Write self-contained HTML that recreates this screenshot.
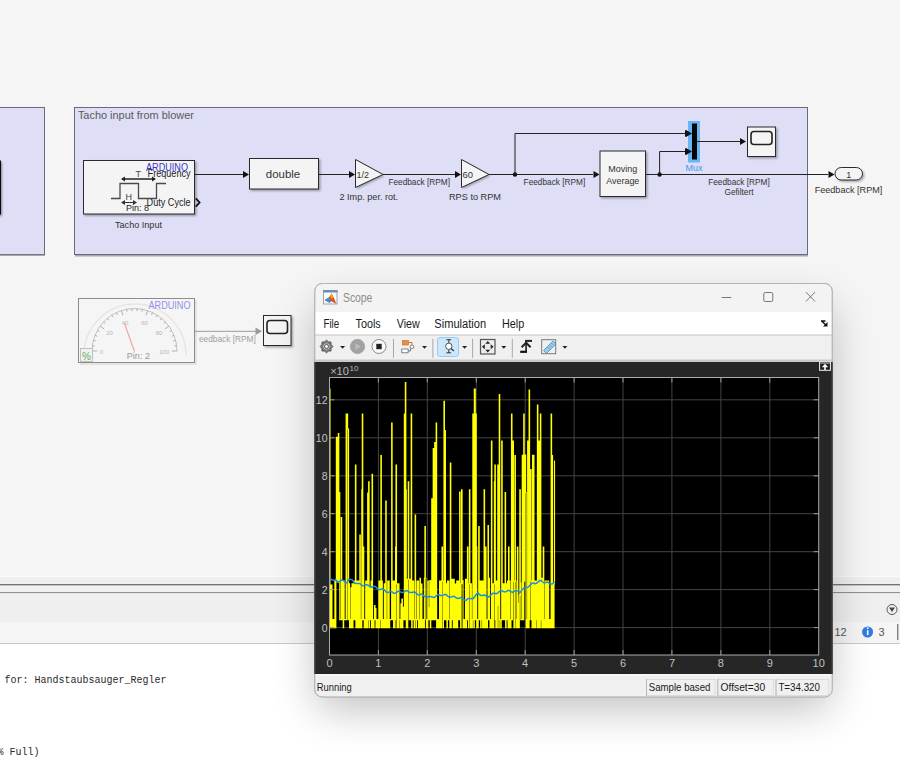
<!DOCTYPE html>
<html><head><meta charset="utf-8"><title>Simulink Scope</title>
<style>html,body{margin:0;padding:0;width:900px;height:761px;overflow:hidden;background:#f5f5f5}
svg{display:block;font-family:"Liberation Sans",sans-serif}</style></head>
<body><svg width="900" height="761" viewBox="0 0 900 761">
<defs><filter id="sh" x="-30%" y="-30%" width="160%" height="160%"><feGaussianBlur stdDeviation="22"/></filter><filter id="bs" x="-20%" y="-20%" width="140%" height="140%"><feGaussianBlur stdDeviation="1.1"/></filter></defs>
<rect x="0" y="0" width="900" height="577" fill="#f5f5f5"/>
<rect x="-10" y="107.5" width="54.5" height="147" fill="#dedef6" stroke="#6a6a7c" stroke-width="1"/>
<rect x="-10" y="254.5" width="55" height="1.5" fill="#8c8c98" opacity="0.75"/>
<rect x="-10" y="160.5" width="11" height="54" fill="#111"/>
<rect x="-9" y="162" width="11" height="54" fill="#000" opacity="0.4" filter="url(#bs)"/>
<rect x="74.5" y="107.5" width="733" height="147" fill="#dedef6" stroke="#6a6a7c" stroke-width="1"/>
<rect x="75" y="255" width="733" height="1.5" fill="#8c8c98" opacity="0.75"/>
<text x="77.9" y="119.3" font-size="11" fill="#5a5a5a" text-anchor="start" textLength="116" lengthAdjust="spacingAndGlyphs" >Tacho input from blower</text>
<rect x="84.5" y="161.5" width="112" height="54.5" fill="#000" opacity="0.32" filter="url(#bs)"/><rect x="83.5" y="160.5" width="111" height="53.5" fill="#f4f4f4" stroke="#2a2a2a" stroke-width="1"/>
<text x="188" y="170.5" font-size="10" fill="#3535d0" text-anchor="end" textLength="42" lengthAdjust="spacingAndGlyphs" >ARDUINO</text>
<text x="190.6" y="177.4" font-size="10" fill="#222" text-anchor="end" textLength="43" lengthAdjust="spacingAndGlyphs" >Frequency</text>
<text x="190.6" y="205.6" font-size="10" fill="#222" text-anchor="end" textLength="44" lengthAdjust="spacingAndGlyphs" >Duty Cycle</text>
<text x="126" y="210.8" font-size="9" fill="#222" text-anchor="start" textLength="23" lengthAdjust="spacingAndGlyphs" >Pin: 8</text>
<text x="115" y="227.5" font-size="9" fill="#333" text-anchor="start" textLength="47" lengthAdjust="spacingAndGlyphs" >Tacho Input</text>
<path d="M111,198.5 H120 V183.5 H138.5 V198.5 H156.5 V183.5 H166" fill="none" stroke="#4a4a4a" stroke-width="1.3"/>
<path d="M122,179 H155" stroke="#222" stroke-width="1.3"/><path d="M121,179 l4,-2.5 v5 z M156,179 l-4,-2.5 v5 z" fill="#222"/>
<text x="135.5" y="176.6" font-size="9" fill="#444" text-anchor="start" >T</text>
<path d="M122,202.5 H136" stroke="#333" stroke-width="1"/><path d="M121,202.5 l4,-2.5 v5 z M137,202.5 l-4,-2.5 v5 z" fill="#333"/>
<text x="125.5" y="200.4" font-size="9" fill="#444" text-anchor="start" >H</text>
<path d="M195.8,198.3 L199.6,202.5 L195.8,206.7" fill="none" stroke="#111" stroke-width="1.8"/>
<path d="M195,174.5 H243" stroke="#222" stroke-width="1"/>
<path d="M243,171.0 L249,174.5 L243,178.0 Z" fill="#111"/>
<rect x="250.5" y="159.5" width="70" height="31.5" fill="#000" opacity="0.32" filter="url(#bs)"/><rect x="249.5" y="158.5" width="69" height="30.5" fill="#f4f4f4" stroke="#2a2a2a" stroke-width="1"/>
<text x="283" y="178" font-size="11.5" fill="#333" text-anchor="middle" textLength="34.4" lengthAdjust="spacingAndGlyphs" >double</text>
<path d="M319,174.5 H349" stroke="#222" stroke-width="1"/>
<path d="M349,171.0 L355,174.5 L349,178.0 Z" fill="#111"/>
<path d="M357,161 L384.5,176 L357,189 Z" fill="#000" opacity="0.3" filter="url(#bs)"/>
<path d="M355.5,159.5 L383,174.5 L355.5,187.5 Z" fill="#f4f4f4" stroke="#2a2a2a" stroke-width="1"/>
<text x="356.5" y="178" font-size="9.5" fill="#333" text-anchor="start" textLength="12.4" lengthAdjust="spacingAndGlyphs" >1/2</text>
<text x="339.5" y="200" font-size="9" fill="#333" text-anchor="start" textLength="58.6" lengthAdjust="spacingAndGlyphs" >2 Imp. per. rot.</text>
<path d="M383,174.5 H455" stroke="#222" stroke-width="1"/>
<path d="M455,171.0 L461,174.5 L455,178.0 Z" fill="#111"/>
<text x="388.4" y="184.5" font-size="8.3" fill="#333" text-anchor="start" textLength="61.6" lengthAdjust="spacingAndGlyphs" >Feedback [RPM]</text>
<path d="M463,161 L490.5,176 L463,189 Z" fill="#000" opacity="0.3" filter="url(#bs)"/>
<path d="M461.5,159.5 L489,174.5 L461.5,187.5 Z" fill="#f4f4f4" stroke="#2a2a2a" stroke-width="1"/>
<text x="462.5" y="178" font-size="9.5" fill="#333" text-anchor="start" textLength="10.5" lengthAdjust="spacingAndGlyphs" >60</text>
<text x="449" y="200" font-size="9" fill="#333" text-anchor="start" textLength="52" lengthAdjust="spacingAndGlyphs" >RPS to RPM</text>
<path d="M489,174.5 H593" stroke="#222" stroke-width="1"/>
<path d="M593.5,171.0 L599.5,174.5 L593.5,178.0 Z" fill="#111"/>
<circle cx="515" cy="174.5" r="2.2" fill="#111"/>
<path d="M515,174.5 V133.5 H685" fill="none" stroke="#222" stroke-width="1"/>
<path d="M685,130.0 L691,133.5 L685,137.0 Z" fill="#111"/>
<text x="523.6" y="184.5" font-size="8.3" fill="#333" text-anchor="start" textLength="61.6" lengthAdjust="spacingAndGlyphs" >Feedback [RPM]</text>
<rect x="601.0" y="152.0" width="46.5" height="46.5" fill="#000" opacity="0.32" filter="url(#bs)"/><rect x="600.0" y="151.0" width="45.5" height="45.5" fill="#f4f4f4" stroke="#2a2a2a" stroke-width="1"/>
<text x="622.8" y="172" font-size="9" fill="#333" text-anchor="middle" textLength="29" lengthAdjust="spacingAndGlyphs" >Moving</text>
<text x="622.8" y="183.5" font-size="9" fill="#333" text-anchor="middle" textLength="33" lengthAdjust="spacingAndGlyphs" >Average</text>
<path d="M646,174.5 H828" stroke="#222" stroke-width="1"/>
<circle cx="659.6" cy="174.5" r="2.2" fill="#111"/>
<path d="M659.6,174.5 V151.5 H685" fill="none" stroke="#222" stroke-width="1"/>
<path d="M685,148.0 L691,151.5 L685,155.0 Z" fill="#111"/>
<rect x="688" y="121" width="12" height="41.5" fill="#66b5f5"/>
<rect x="692" y="123.5" width="5" height="36" fill="#050505"/>
<path d="M686,130.0 L692,133.5 L686,137.0 Z" fill="#111"/>
<path d="M686,148.0 L692,151.5 L686,155.0 Z" fill="#111"/>
<text x="694" y="171" font-size="9" fill="#3d9ae8" text-anchor="middle" textLength="17" lengthAdjust="spacingAndGlyphs" >Mux</text>
<path d="M697,141.5 H740" stroke="#222" stroke-width="1"/>
<path d="M740,138.0 L746,141.5 L740,145.0 Z" fill="#111"/>
<rect x="748.5" y="128.0" width="29" height="30.5" fill="#000" opacity="0.32" filter="url(#bs)"/><rect x="747.5" y="127.0" width="28" height="29.5" fill="#f4f4f4" stroke="#2a2a2a" stroke-width="1"/>
<rect x="751" y="131.5" width="21" height="13" rx="3" fill="none" stroke="#222" stroke-width="1.6"/>
<text x="739" y="184.5" font-size="8.3" fill="#333" text-anchor="middle" textLength="61.6" lengthAdjust="spacingAndGlyphs" >Feedback [RPM]</text>
<text x="739" y="194.5" font-size="8.3" fill="#333" text-anchor="middle" textLength="29" lengthAdjust="spacingAndGlyphs" >Gefiltert</text>
<path d="M828.5,171.0 L834.5,174.5 L828.5,178.0 Z" fill="#111"/>
<rect x="836.5" y="169" width="28" height="13" rx="6.5" fill="#000" opacity="0.3" filter="url(#bs)"/>
<rect x="835" y="167.5" width="27.5" height="12.5" rx="6.25" fill="#f4f4f4" stroke="#2a2a2a" stroke-width="1"/>
<text x="848.7" y="177.8" font-size="9" fill="#333" text-anchor="middle" >1</text>
<text x="848.5" y="193" font-size="9" fill="#333" text-anchor="middle" textLength="67.7" lengthAdjust="spacingAndGlyphs" >Feedback [RPM]</text>
<rect x="80" y="300" width="117" height="65" fill="#000" opacity="0.07"/>
<rect x="78.5" y="298.5" width="116" height="64" fill="#f5f5f5" stroke="#8c8c8c" stroke-width="1"/>
<path d="M84,355 A51,51 0 0 1 186,355" fill="none" stroke="#e6e6e6" stroke-width="1.5"/>
<path d="M92,351 A42.5,42.5 0 0 1 177,351" fill="none" stroke="#b4b4b4" stroke-width="0.8"/>
<path d="M92.0,351.0 L97.0,351.0 M92.3,345.7 L94.8,346.0 M93.3,340.4 L95.8,341.1 M95.0,335.4 L97.3,336.3 M97.3,330.5 L99.4,331.7 M100.1,326.0 L104.2,329.0 M103.5,321.9 L105.3,323.6 M107.4,318.3 L109.0,320.2 M111.7,315.1 L113.1,317.2 M116.4,312.5 L117.5,314.8 M121.4,310.6 L122.9,315.3 M126.5,309.3 L127.0,311.7 M131.8,308.6 L132.0,311.1 M137.2,308.6 L137.0,311.1 M142.5,309.3 L142.0,311.7 M147.6,310.6 L146.1,315.3 M152.6,312.5 L151.5,314.8 M157.3,315.1 L155.9,317.2 M161.6,318.3 L160.0,320.2 M165.5,321.9 L163.7,323.6 M168.9,326.0 L164.8,329.0 M171.7,330.5 L169.6,331.7 M174.0,335.4 L171.7,336.3 M175.7,340.4 L173.2,341.1 M176.7,345.7 L174.2,346.0 M177.0,351.0 L172.0,351.0" stroke="#a8a8a8" stroke-width="0.9"/>
<text x="101.5" y="353.5" font-size="6" fill="#b5b5b5" text-anchor="middle" >0</text>
<text x="109.5" y="334.5" font-size="6" fill="#b5b5b5" text-anchor="middle" >20</text>
<text x="125" y="324.5" font-size="6" fill="#b5b5b5" text-anchor="middle" >40</text>
<text x="144.5" y="324.5" font-size="6" fill="#b5b5b5" text-anchor="middle" >60</text>
<text x="159" y="334.5" font-size="6" fill="#b5b5b5" text-anchor="middle" >80</text>
<text x="164" y="353.5" font-size="6" fill="#b5b5b5" text-anchor="middle" >100</text>
<path d="M134.5,351.5 L124.5,323.5" stroke="#f0a0a0" stroke-width="1.1"/>
<text x="126.8" y="359" font-size="9" fill="#9a9a9a" text-anchor="start" textLength="23.2" lengthAdjust="spacingAndGlyphs" >Pin: 2</text>
<text x="190.5" y="308.7" font-size="10" fill="#9090ec" text-anchor="end" textLength="42" lengthAdjust="spacingAndGlyphs" >ARDUINO</text>
<rect x="80.5" y="348.5" width="12" height="13" fill="#eef3ee" stroke="#b5b5b5" stroke-width="0.8"/>
<text x="86.5" y="359.5" font-size="10" fill="#6aa86a" text-anchor="middle" >%</text>
<path d="M195,331.3 H257" stroke="#9a9a9a" stroke-width="1"/>
<path d="M255.5,327.5 L262,331.3 L255.5,335 Z" fill="#9a9a9a"/>
<text x="199" y="341.5" font-size="8.3" fill="#a0a0a0" text-anchor="start" textLength="56.7" lengthAdjust="spacingAndGlyphs" >eedback [RPM]</text>
<rect x="264.5" y="316.5" width="28.5" height="31" fill="#000" opacity="0.32" filter="url(#bs)"/><rect x="263.5" y="315.5" width="27.5" height="30" fill="#f4f4f4" stroke="#2a2a2a" stroke-width="1"/>
<rect x="267" y="320.5" width="20.5" height="13" rx="3" fill="none" stroke="#222" stroke-width="1.6"/>
<rect x="0" y="576" width="900" height="1" fill="#fafafa"/>
<rect x="0" y="577" width="900" height="7.5" fill="#efefef"/>
<rect x="0" y="584" width="900" height="1.6" fill="#747474"/>
<rect x="0" y="585.6" width="900" height="6.5" fill="#f0f0f0"/>
<rect x="0" y="592" width="900" height="1.3" fill="#8c909a"/>
<rect x="0" y="593.3" width="900" height="29" fill="#efefef"/>
<rect x="0" y="622" width="900" height="21" fill="#f5f5f5"/>
<rect x="0" y="643" width="900" height="1" fill="#c8c8c8"/>
<rect x="0" y="644" width="900" height="117" fill="#ffffff"/>
<circle cx="892" cy="609.5" r="5" fill="none" stroke="#555" stroke-width="1"/><path d="M889,607.5 L895,607.5 L892,612 Z" fill="#444"/>
<text x="834.5" y="636" font-size="11" fill="#555" text-anchor="start" >12</text>
<circle cx="867.6" cy="632" r="5.5" fill="#2f7de1"/><rect x="866.9" y="630.2" width="1.6" height="4.8" fill="#fff"/><circle cx="867.7" cy="628.2" r="0.9" fill="#fff"/>
<text x="878.5" y="636" font-size="11" fill="#555" text-anchor="start" >3</text>
<rect x="897.3" y="624" width="1" height="16" fill="#555"/>
<text x="4.4" y="683.4" font-family="Liberation Mono, monospace" font-size="10" fill="#2a2a2a">for: Handstaubsauger_Regler</text>
<text x="-2.4" y="755" font-family="Liberation Mono, monospace" font-size="10" fill="#2a2a2a">% Full)</text>
<rect x="316.8" y="305.5" width="513.4000000000001" height="403.5" rx="8" fill="#000" opacity="0.25" filter="url(#sh)"/>
<rect x="314.8" y="283.5" width="517.4000000000001" height="413.5" rx="7.5" fill="#f3f3f3" stroke="#b4b4b4" stroke-width="1"/>
<clipPath id="wclip"><rect x="315.3" y="284.0" width="516.4000000000001" height="412.5" rx="7"/></clipPath>
<g clip-path="url(#wclip)">
<rect x="314.8" y="283.5" width="517.4000000000001" height="28.5" fill="#f3f3f3"/>
<rect x="323.5" y="290.5" width="13.5" height="13.5" fill="#fbfbfb" stroke="#9aa3ad" stroke-width="1"/>
<rect x="323" y="290" width="14.5" height="2.5" fill="#6b8fb3"/>
<path d="M324.6,300 L329.3,297.3 L331.6,293.2 L333.8,297.5 L336.3,303.8 L331.2,301.3 L329.5,302.8 Z" fill="#d9531e"/><path d="M324.6,300 L329.3,297.3 L330.8,300.8 L329.5,302.8 Z" fill="#3d8fd1"/><path d="M331.6,293.2 L333,296.8 L331.9,299.5 L330.6,296 Z" fill="#f5b51a"/>
<text x="343" y="302.2" font-size="12" fill="#8c8c8c" text-anchor="start" textLength="29.3" lengthAdjust="spacingAndGlyphs" >Scope</text>
<rect x="721.7" y="297" width="9.6" height="1" fill="#777"/>
<rect x="763.8" y="292.5" width="9" height="9" rx="1.5" fill="none" stroke="#777" stroke-width="1"/>
<path d="M806,292.2 L815,301.4 M815,292.2 L806,301.4" stroke="#777" stroke-width="1"/>
<rect x="314.8" y="312" width="517.4000000000001" height="23" fill="#ffffff"/>
<rect x="314.8" y="334.6" width="517.4000000000001" height="1" fill="#b4b4b4"/>
<text x="323.4" y="327.5" font-size="12" fill="#1a1a1a" text-anchor="start" textLength="15.8" lengthAdjust="spacingAndGlyphs" >File</text>
<text x="355.5" y="327.5" font-size="12" fill="#1a1a1a" text-anchor="start" textLength="25.2" lengthAdjust="spacingAndGlyphs" >Tools</text>
<text x="396.8" y="327.5" font-size="12" fill="#1a1a1a" text-anchor="start" textLength="23" lengthAdjust="spacingAndGlyphs" >View</text>
<text x="434.3" y="327.5" font-size="12" fill="#1a1a1a" text-anchor="start" textLength="51.8" lengthAdjust="spacingAndGlyphs" >Simulation</text>
<text x="502" y="327.5" font-size="12" fill="#1a1a1a" text-anchor="start" textLength="22.2" lengthAdjust="spacingAndGlyphs" >Help</text>
<path d="M821,321 L825.5,321 M821.5,321 L826.5,325.5" stroke="#111" stroke-width="1.4"/><path d="M827.5,322 L827.5,326.5 L823,326.5 Z" fill="#111"/>
<rect x="314.8" y="335.6" width="517.4000000000001" height="24" fill="#f0f0f0"/>
<rect x="314.8" y="359.5" width="517.4000000000001" height="2.5" fill="#c9c9c9"/>
<polygon points="332.80,346.50 331.12,348.41 330.95,350.95 328.41,351.12 326.50,352.80 324.59,351.12 322.05,350.95 321.88,348.41 320.20,346.50 321.88,344.59 322.05,342.05 324.59,341.88 326.50,340.20 328.41,341.88 330.95,342.05 331.12,344.59" fill="#8a8a8a" stroke="#444" stroke-width="0.9"/><circle cx="326.5" cy="346.5" r="3.6" fill="#d0d0d0" stroke="#555" stroke-width="0.6"/><circle cx="326.5" cy="346.5" r="2" fill="#fafafa" stroke="#333" stroke-width="0.8"/>
<path d="M340.1,345.9 L345.1,345.9 L342.6,348.7 Z" fill="#222"/>
<circle cx="357.5" cy="346.5" r="7.2" fill="#a2a2a2" stroke="#999" stroke-width="0.6"/><path d="M355.5,343 L360.5,346.5 L355.5,350 Z" fill="#bdbdbd"/>
<circle cx="379" cy="346.5" r="7" fill="#fafafa" stroke="#8a8a8a" stroke-width="1"/><rect x="376.3" y="343.8" width="5.4" height="5.4" fill="#222"/>
<rect x="393.0" y="338.8" width="1" height="19" fill="#a8a8a8"/>
<rect x="402.5" y="340.5" width="6" height="4.5" fill="#f08a3c" stroke="#c86a20" stroke-width="0.6"/><path d="M408.5,342.5 H412 V345" fill="none" stroke="#d06a20" stroke-width="0.9"/><circle cx="412" cy="346.8" r="1.8" fill="#fff" stroke="#666" stroke-width="0.8"/><rect x="401.8" y="349" width="6.3" height="3.8" fill="#fff" stroke="#666" stroke-width="0.8"/><path d="M408,351 H410.5 V348.5" fill="none" stroke="#666" stroke-width="0.8"/>
<path d="M422.0,345.9 L427.0,345.9 L424.5,348.7 Z" fill="#222"/>
<rect x="432.4" y="338.8" width="1" height="19" fill="#a8a8a8"/>
<rect x="437.5" y="337.5" width="21" height="19" rx="2.5" fill="#cce6fb" stroke="#96ccf5" stroke-width="1"/>
<path d="M446.4,339.7 H451.1 M448.8,339.7 V343 M448.8,349.6 V352.8 M446.4,352.8 H451.1" stroke="#333" stroke-width="1"/><circle cx="448.8" cy="346.3" r="3.2" fill="#fff" stroke="#555" stroke-width="1"/><path d="M451,348.5 L453.9,351" stroke="#333" stroke-width="1.2"/>
<path d="M462.1,345.9 L467.1,345.9 L464.6,348.7 Z" fill="#222"/>
<rect x="472.1" y="338.8" width="1" height="19" fill="#a8a8a8"/>
<rect x="480.5" y="339.5" width="14.5" height="14.5" fill="#ececec" stroke="#555" stroke-width="1.2"/><path d="M487.75,341 L485.3,343.8 H490.2 Z M487.75,352.5 L485.3,349.7 H490.2 Z M482,346.75 L484.8,344.3 V349.2 Z M493.5,346.75 L490.7,344.3 V349.2 Z" fill="#222"/>
<path d="M501.3,345.9 L506.3,345.9 L503.8,348.7 Z" fill="#222"/>
<rect x="511.79999999999995" y="338.8" width="1" height="19" fill="#a8a8a8"/>
<rect x="525" y="339.9" width="7" height="2" fill="#222"/><rect x="525.2" y="340" width="1.8" height="12" fill="#333"/><path d="M521.6,347.2 L526.1,342.7 L530.6,347.2" fill="none" stroke="#222" stroke-width="2"/><rect x="520.2" y="350.7" width="6.8" height="2.2" fill="#111"/>
<rect x="541.7" y="339.7" width="14" height="14" fill="#f0f0f0" stroke="#777" stroke-width="1"/><path d="M543.5,350.5 L553,341 L556,344 L546.5,353.5 Z" fill="#92cdee" stroke="#4a7f9f" stroke-width="0.7"/><path d="M548,347.5 l1.2,1.2 M550,345.5 l1.2,1.2 M552,343.5 l1.2,1.2" stroke="#3a6f8f" stroke-width="0.6"/>
<path d="M562.4,345.9 L567.4,345.9 L564.9,348.7 Z" fill="#222"/>
<rect x="314.8" y="362" width="517.4000000000001" height="312" fill="#262626"/>
<rect x="329.5" y="377.5" width="489.20000000000005" height="277.5" fill="#000"/>
<path d="M378.4,377.5 V655 M427.3,377.5 V655 M476.3,377.5 V655 M525.2,377.5 V655 M574.1,377.5 V655 M623.0,377.5 V655 M671.9,377.5 V655 M720.9,377.5 V655 M769.8,377.5 V655 M329.5,627.6 H818.7 M329.5,589.6 H818.7 M329.5,551.7 H818.7 M329.5,513.7 H818.7 M329.5,475.8 H818.7 M329.5,437.8 H818.7 M329.5,399.8 H818.7" stroke="#444444" stroke-width="1"/>
<clipPath id="axclip"><rect x="329.5" y="377.5" width="489.2" height="277.5"/></clipPath><g clip-path="url(#axclip)"><path d="M329.50,389.0H329.99V627.6H330.48V585.1H330.97V627.6H331.46V585.1H331.95V627.6H332.44V619.6H332.92V627.6H333.41V619.6H333.90V627.6H334.39V619.6H334.88V581.1H335.37V627.6H335.86V581.1H336.35V437.4H336.84V581.1H337.33V437.4H337.82V582.1H338.31V433.5H338.79V581.1H339.28V492.5H339.77V619.6H340.26V619.6H340.75V619.6H341.24V517.5H341.73V619.6H342.22V619.6H342.71V581.1H343.20V627.6H343.69V581.1H344.18V619.6H344.67V619.6H345.15V619.6H345.64V619.6H346.13V414.0H346.62V619.6H347.11V414.0H347.60V429.0H348.09V429.0H348.58V619.6H349.07V583.9H349.56V627.6H350.05V619.6H350.54V627.6H351.02V587.9H351.51V627.6H352.00V583.9H352.49V627.6H352.98V583.9H353.47V619.6H353.96V619.6H354.45V581.1H354.94V619.6H355.43V465.0H355.92V627.6H356.41V581.1H356.90V627.6H357.38V581.1H357.87V627.6H358.36V581.1H358.85V619.6H359.34V627.6H359.83V535.0H360.32V627.6H360.81V619.6H361.30V627.6H361.79V489.7H362.28V414.0H362.77V619.6H363.25V547.0H363.74V619.6H364.23V627.6H364.72V619.6H365.21V627.6H365.70V581.1H366.19V627.6H366.68V581.1H367.17V627.6H367.66V493.0H368.15V619.6H368.64V481.7H369.13V627.6H369.61V619.6H370.10V587.4H370.59V619.6H371.08V581.1H371.57V627.6H372.06V474.3H372.55V627.6H373.04V619.6H373.53V627.6H374.02V619.6H374.51V605.6H375.00V619.6H375.48V608.5H375.97V627.6H376.46V619.6H376.95V627.6H377.44V619.6H377.93V627.6H378.42V619.6H378.91V581.1H379.40V627.6H379.89V581.1H380.38V619.6H380.87V455.6H381.36V627.6H381.84V581.1H382.33V619.6H382.82V627.6H383.31V619.6H383.80V627.6H384.29V583.9H384.78V627.6H385.27V583.9H385.76V501.0H386.25V627.6H386.74V619.6H387.23V627.6H387.71V581.1H388.20V627.6H388.69V581.1H389.18V627.6H389.67V619.6H390.16V619.6H390.65V619.6H391.14V619.6H391.63V423.0H392.12V619.6H392.61V619.6H393.10V581.1H393.59V627.6H394.07V581.1H394.56V627.6H395.05V619.6H395.54V547.0H396.03V465.0H396.52V583.9H397.01V627.6H397.50V583.9H397.99V627.6H398.48V583.9H398.97V619.6H399.46V619.6H399.94V627.6H400.43V619.6H400.92V603.9H401.41V627.6H401.90V599.0H402.39V627.6H402.88V607.4H403.37V619.6H403.86V619.6H404.35V414.0H404.84V619.6H405.33V382.5H405.82V489.7H406.30V627.6H406.79V579.2H407.28V627.6H407.77V579.2H408.26V481.7H408.75V579.2H409.24V619.6H409.73V579.2H410.22V619.6H410.71V619.6H411.20V414.0H411.69V627.6H412.17V581.1H412.66V619.6H413.15V581.1H413.64V619.6H414.13V627.6H414.62V619.6H415.11V515.0H415.60V619.6H416.09V627.6H416.58V619.6H417.07V581.1H417.56V619.6H418.05V581.1H418.53V627.6H419.02V619.6H419.51V627.6H420.00V578.3H420.49V627.6H420.98V606.3H421.47V584.0H421.96V627.6H422.45V619.6H422.94V627.6H423.43V619.6H423.92V627.6H424.40V578.3H424.89V526.5H425.38V578.3H425.87V619.6H426.36V627.6H426.85V619.6H427.34V627.6H427.83V581.1H428.32V619.6H428.81V607.8H429.30V619.6H429.79V580.6H430.28V627.6H430.76V581.1H431.25V619.6H431.74V498.9H432.23V619.6H432.72V619.6H433.21V448.5H433.70V619.6H434.19V619.6H434.68V442.5H435.17V619.6H435.66V578.3H436.15V423.0H436.63V627.6H437.12V619.6H437.61V627.6H438.10V619.6H438.59V627.6H439.08V619.6H439.57V581.1H440.06V627.6H440.55V581.1H441.04V627.6H441.53V581.1H442.02V547.0H442.51V581.1H442.99V627.6H443.48V619.6H443.97V401.4H444.46V619.6H444.95V430.5H445.44V619.6H445.93V583.9H446.42V619.6H446.91V627.6H447.40V581.1H447.89V619.6H448.38V581.1H448.86V619.6H449.35V619.6H449.84V627.6H450.33V463.0H450.82V627.6H451.31V619.6H451.80V579.2H452.29V619.6H452.78V579.2H453.27V627.6H453.76V579.2H454.25V619.6H454.74V627.6H455.22V584.0H455.71V627.6H456.20V619.6H456.69V581.1H457.18V627.6H457.67V581.1H458.16V619.6H458.65V581.1H459.14V619.6H459.63V492.0H460.12V583.7H460.61V627.6H461.09V583.7H461.58V489.7H462.07V583.7H462.56V580.6H463.05V627.6H463.54V619.6H464.03V627.6H464.52V619.6H465.01V627.6H465.50V579.2H465.99V627.6H466.48V579.2H466.97V619.6H467.45V547.0H467.94V619.6H468.43V627.6H468.92V583.9H469.41V489.7H469.90V583.9H470.39V627.6H470.88V583.9H471.37V619.6H471.86V627.6H472.35V619.6H472.84V414.0H473.32V414.0H473.81V627.6H474.30V389.0H474.79V389.0H475.28V619.6H475.77V414.0H476.26V547.0H476.75V627.6H477.24V619.6H477.73V627.6H478.22V619.6H478.71V526.5H479.20V619.6H479.68V581.1H480.17V619.6H480.66V627.6H481.15V581.1H481.64V619.6H482.13V581.1H482.62V627.6H483.11V581.1H483.60V627.6H484.09V489.7H484.58V619.6H485.07V627.6H485.55V547.0H486.04V627.6H486.53V619.6H487.02V627.6H487.51V619.6H488.00V525.6H488.49V619.6H488.98V578.3H489.47V619.6H489.96V627.6H490.45V619.6H490.94V627.6H491.43V441.0H491.91V627.6H492.40V619.6H492.89V583.9H493.38V627.6H493.87V583.9H494.36V481.7H494.85V465.0H495.34V619.6H495.83V627.6H496.32V581.1H496.81V627.6H497.30V605.2H497.78V465.0H498.27V581.1H498.76V627.6H499.25V394.5H499.74V619.6H500.23V619.6H500.72V627.6H501.21V619.6H501.70V441.0H502.19V583.9H502.68V619.6H503.17V583.9H503.66V619.6H504.14V583.9H504.63V619.6H505.12V492.5H505.61V627.6H506.10V583.9H506.59V619.6H507.08V619.6H507.57V581.1H508.06V627.6H508.55V547.0H509.04V627.6H509.53V581.1H510.01V619.6H510.50V627.6H510.99V619.6H511.48V414.0H511.97V619.6H512.46V581.1H512.95V441.0H513.44V581.1H513.93V627.6H514.42V581.1H514.91V455.6H515.40V581.1H515.89V627.6H516.37V619.6H516.86V627.6H517.35V547.0H517.84V627.6H518.33V603.3H518.82V627.6H519.31V595.2H519.80V489.7H520.29V583.1H520.78V619.6H521.27V619.6H521.76V619.6H522.24V455.4H522.73V619.6H523.22V619.6H523.71V414.0H524.20V581.1H524.69V481.5H525.18V455.0H525.67V492.5H526.16V627.6H526.65V619.6H527.14V627.6H527.63V441.0H528.12V581.1H528.60V627.6H529.09V390.0H529.58V619.6H530.07V581.1H530.56V469.5H531.05V581.1H531.54V619.6H532.03V627.6H532.52V455.4H533.01V627.6H533.50V455.4H533.99V627.6H534.47V581.1H534.96V627.6H535.45V581.1H535.94V619.6H536.43V581.1H536.92V627.6H537.41V405.0H537.90V619.6H538.39V627.6H538.88V441.0H539.37V578.3H539.86V627.6H540.35V414.0H540.83V619.6H541.32V578.3H541.81V627.6H542.30V578.3H542.79V627.6H543.28V547.0H543.77V627.6H544.26V619.6H544.75V627.6H545.24V581.1H545.73V627.6H546.22V581.1H546.70V627.6H547.19V581.1H547.68V627.6H548.17V581.1H548.66V627.6H549.15V619.6H549.64V627.6H550.13V619.6H550.62V627.6H551.11V414.0H551.60V627.6H552.09V455.6H552.58V627.6H553.06V583.9H553.55V627.6H554.04V583.9H554.53V461.0H555.03" fill="none" stroke="#ffff00" stroke-width="1.1"/><polyline points="329.5,577.9 331.0,579.2 332.5,580.0 334.0,580.2 335.5,579.7 337.0,581.3 338.5,581.8 340.0,581.2 341.5,580.0 343.0,580.3 344.5,581.2 346.0,583.1 347.5,582.1 349.0,579.3 350.5,579.4 352.0,579.6 353.5,581.5 355.0,583.3 356.5,583.4 358.0,583.4 359.5,583.5 361.0,584.5 362.5,585.8 364.0,585.5 365.5,585.0 367.0,584.8 368.5,585.3 370.0,586.7 371.5,587.1 373.0,586.7 374.5,586.4 376.0,587.0 377.5,588.7 379.0,589.7 380.5,589.6 382.0,588.9 383.5,589.3 385.0,590.6 386.5,592.3 388.0,592.5 389.5,591.9 391.0,591.5 392.5,592.1 394.0,593.4 395.5,593.0 397.0,592.1 398.5,591.1 400.0,591.6 401.5,592.5 403.0,592.6 404.5,591.7 406.0,590.5 407.5,591.0 409.0,592.0 410.5,592.5 412.0,592.5 413.5,592.1 415.0,592.3 416.5,593.5 418.0,594.7 419.5,594.9 421.0,594.0 422.5,594.6 424.0,595.8 425.5,597.0 427.0,597.4 428.5,596.7 430.0,596.4 431.5,596.8 433.0,597.3 434.5,597.4 436.0,596.0 437.5,594.5 439.0,594.8 440.5,595.4 442.0,595.5 443.5,595.1 445.0,594.3 446.5,595.0 448.0,596.3 449.5,597.2 451.0,597.1 452.5,596.4 454.0,596.2 455.5,597.5 457.0,598.3 458.5,598.5 460.0,597.9 461.5,597.4 463.0,598.5 464.5,600.0 466.0,600.4 467.5,599.0 469.0,598.4 470.5,598.4 472.0,599.0 473.5,598.3 475.0,596.2 476.5,594.0 478.0,592.7 479.5,594.6 481.0,595.5 482.5,595.5 484.0,595.0 485.5,595.5 487.0,596.3 488.5,596.9 490.0,596.1 491.5,594.3 493.0,593.3 494.5,593.3 496.0,593.8 497.5,593.3 499.0,591.7 500.5,590.5 502.0,590.8 503.5,591.6 505.0,591.9 506.5,591.4 508.0,590.4 509.5,590.8 511.0,591.6 512.5,592.3 514.0,591.3 515.5,590.7 517.0,590.7 518.5,591.2 520.0,592.5 521.5,590.8 523.0,589.0 524.5,587.5 526.0,587.5 527.5,587.6 529.0,586.3 530.5,584.9 532.0,583.1 533.5,583.1 535.0,583.7 536.5,583.3 538.0,581.9 539.5,580.8 541.0,580.4 542.5,581.8 544.0,583.0 545.5,582.6 547.0,582.0 548.5,582.6 550.0,583.9 551.5,584.1 553.0,583.6 554.5,581.8" fill="none" stroke="#1a8fe6" stroke-width="1.5"/></g>
<path d="M378.4,377.5 v5 M378.4,655 v-5 M427.3,377.5 v5 M427.3,655 v-5 M476.3,377.5 v5 M476.3,655 v-5 M525.2,377.5 v5 M525.2,655 v-5 M574.1,377.5 v5 M574.1,655 v-5 M623.0,377.5 v5 M623.0,655 v-5 M671.9,377.5 v5 M671.9,655 v-5 M720.9,377.5 v5 M720.9,655 v-5 M769.8,377.5 v5 M769.8,655 v-5 M329.5,627.6 h5 M818.7,627.6 h-5 M329.5,589.6 h5 M818.7,589.6 h-5 M329.5,551.7 h5 M818.7,551.7 h-5 M329.5,513.7 h5 M818.7,513.7 h-5 M329.5,475.8 h5 M818.7,475.8 h-5 M329.5,437.8 h5 M818.7,437.8 h-5 M329.5,399.8 h5 M818.7,399.8 h-5" stroke="#9a9a9a" stroke-width="1"/>
<rect x="329.5" y="377.5" width="489.20000000000005" height="277.5" fill="none" stroke="#ababab" stroke-width="1"/>
<text x="327.5" y="631.6" font-size="10.5" fill="#c4c4c4" text-anchor="end" >0</text>
<text x="327.5" y="593.64" font-size="10.5" fill="#c4c4c4" text-anchor="end" >2</text>
<text x="327.5" y="555.6800000000001" font-size="10.5" fill="#c4c4c4" text-anchor="end" >4</text>
<text x="327.5" y="517.72" font-size="10.5" fill="#c4c4c4" text-anchor="end" >6</text>
<text x="327.5" y="479.76" font-size="10.5" fill="#c4c4c4" text-anchor="end" >8</text>
<text x="327.5" y="441.8" font-size="10.5" fill="#c4c4c4" text-anchor="end" >10</text>
<text x="327.5" y="403.84000000000003" font-size="10.5" fill="#c4c4c4" text-anchor="end" >12</text>
<text x="329.5" y="666.5" font-size="11" fill="#c0c0c0" text-anchor="middle" >0</text>
<text x="378.42" y="666.5" font-size="11" fill="#c0c0c0" text-anchor="middle" >1</text>
<text x="427.34000000000003" y="666.5" font-size="11" fill="#c0c0c0" text-anchor="middle" >2</text>
<text x="476.26" y="666.5" font-size="11" fill="#c0c0c0" text-anchor="middle" >3</text>
<text x="525.1800000000001" y="666.5" font-size="11" fill="#c0c0c0" text-anchor="middle" >4</text>
<text x="574.1" y="666.5" font-size="11" fill="#c0c0c0" text-anchor="middle" >5</text>
<text x="623.02" y="666.5" font-size="11" fill="#c0c0c0" text-anchor="middle" >6</text>
<text x="671.94" y="666.5" font-size="11" fill="#c0c0c0" text-anchor="middle" >7</text>
<text x="720.86" y="666.5" font-size="11" fill="#c0c0c0" text-anchor="middle" >8</text>
<text x="769.78" y="666.5" font-size="11" fill="#c0c0c0" text-anchor="middle" >9</text>
<text x="818.7" y="666.5" font-size="11" fill="#c0c0c0" text-anchor="middle" >10</text>
<text x="330.2" y="375" font-size="11" fill="#bbbbbb" text-anchor="start" textLength="18.7" lengthAdjust="spacingAndGlyphs" >×10</text>
<text x="349.6" y="371" font-size="8" fill="#bbbbbb" text-anchor="start" >10</text>
<rect x="819.6" y="361.7" width="10.8" height="8.6" fill="#1e1e1e" stroke="#f0f0f0" stroke-width="1"/><rect x="820.2" y="362.3" width="9.6" height="1.6" fill="#8a8a8a"/><path d="M825,363.8 L828.2,367.2 H825.8 V370 H824.2 V367.2 H821.8 Z" fill="#fff"/>
<rect x="314.8" y="674" width="517.4000000000001" height="25" fill="#f0f0f0"/><rect x="314.8" y="674" width="517.4000000000001" height="1.5" fill="#f8f8f8"/>
<text x="316.8" y="690.5" font-size="11" fill="#1a1a1a" text-anchor="start" textLength="35" lengthAdjust="spacingAndGlyphs" >Running</text>
<rect x="646.5" y="679.5" width="68.60000000000002" height="16" fill="none" stroke="#dcdcdc" stroke-width="1"/><rect x="646" y="679" width="1" height="17" fill="#b8b8b8"/>
<text x="648.8" y="690.8" font-size="11" fill="#1a1a1a" text-anchor="start" textLength="61.6" lengthAdjust="spacingAndGlyphs" >Sample based</text>
<rect x="717.8" y="679.5" width="55.5" height="16" fill="none" stroke="#dcdcdc" stroke-width="1"/><rect x="717.3" y="679" width="1" height="17" fill="#b8b8b8"/>
<text x="720.6" y="690.8" font-size="11" fill="#1a1a1a" text-anchor="start" textLength="44.5" lengthAdjust="spacingAndGlyphs" >Offset=30</text>
<rect x="776.0" y="679.5" width="52.799999999999955" height="16" fill="none" stroke="#dcdcdc" stroke-width="1"/><rect x="775.5" y="679" width="1" height="17" fill="#b8b8b8"/>
<text x="778.4" y="690.8" font-size="11" fill="#1a1a1a" text-anchor="start" textLength="41.6" lengthAdjust="spacingAndGlyphs" >T=34.320</text>
</g>
<rect x="314.8" y="283.5" width="517.4000000000001" height="413.5" rx="7.5" fill="none" stroke="#b4b4b4" stroke-width="1"/>
<rect x="314.3" y="362" width="1.5" height="312" fill="#262626"/><rect x="831.2" y="362" width="1.5" height="312" fill="#262626"/>
</svg></body></html>
